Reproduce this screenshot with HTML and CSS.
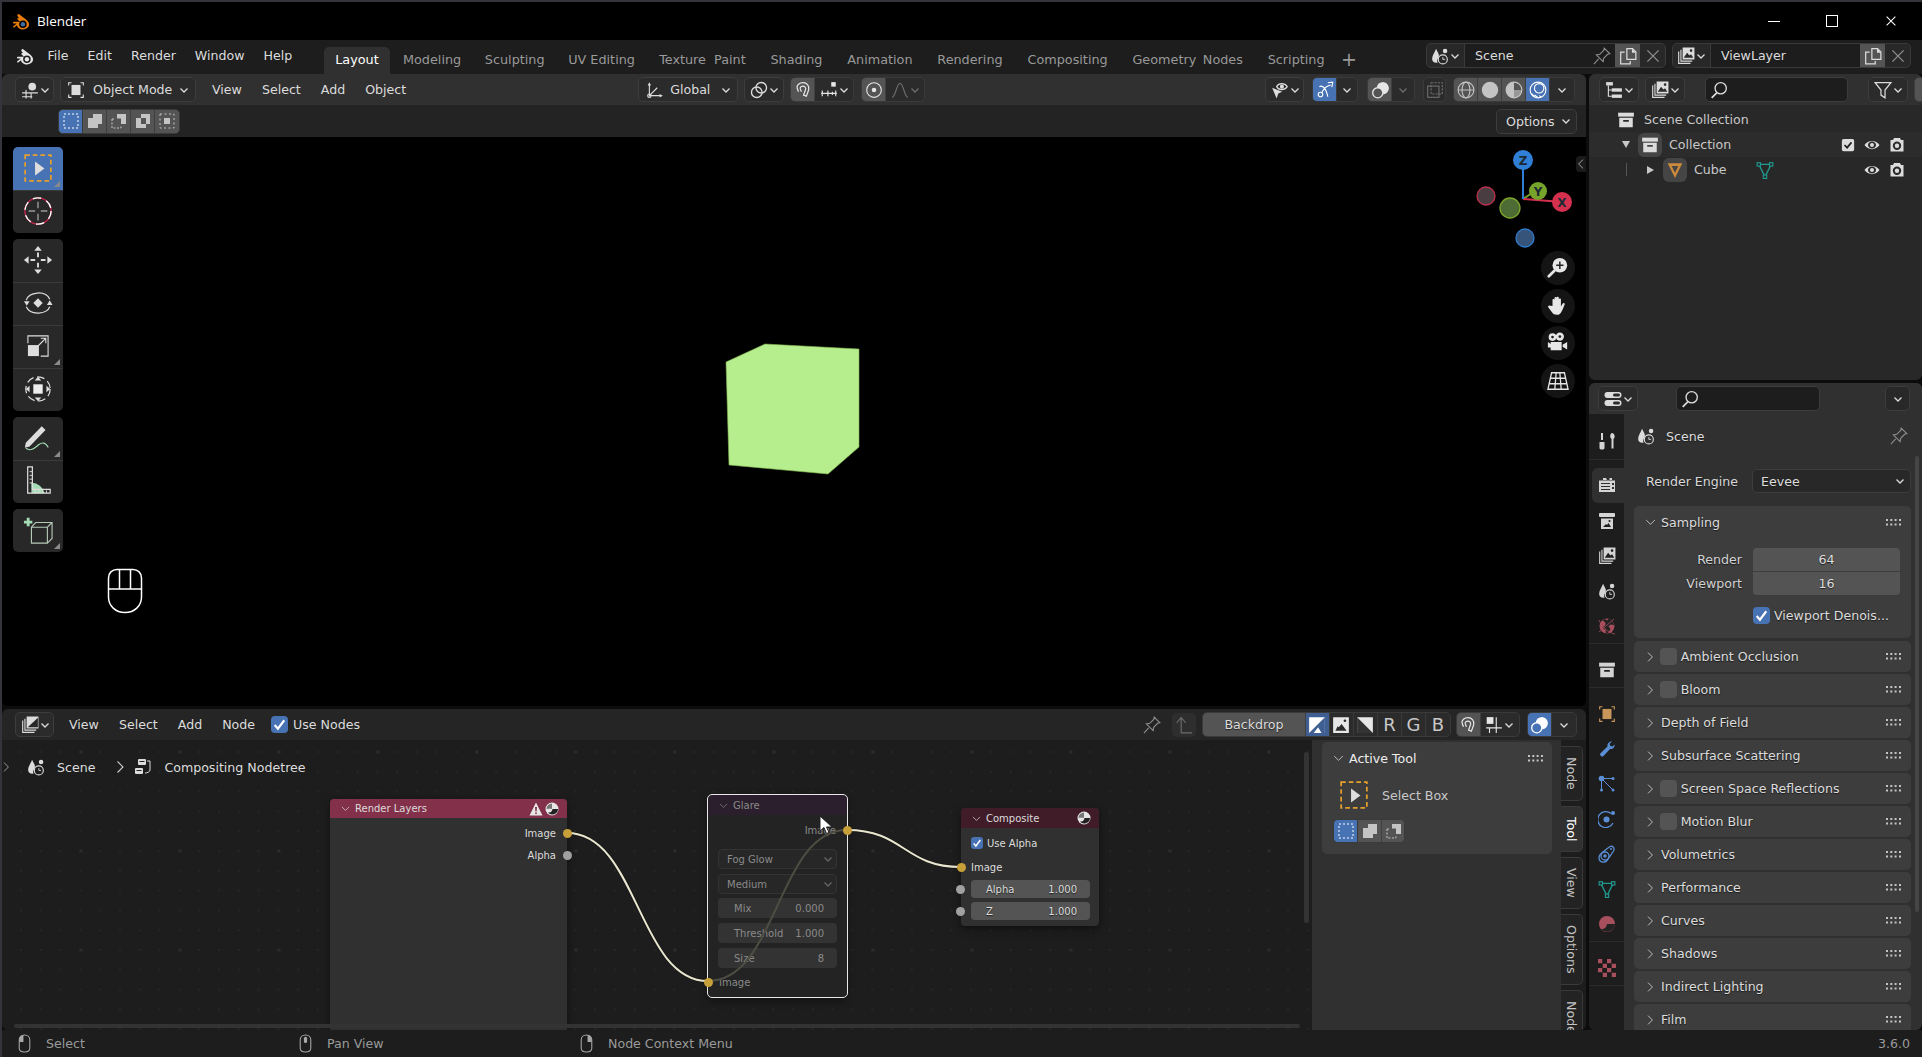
FILE: index.html
```html
<!DOCTYPE html>
<html lang="en">
<head>
    <meta charset="UTF-8">
    <title>Blender</title>
    <link rel="stylesheet" href="styles.css">
</head>
<body>
<svg class="sprite" xmlns="http://www.w3.org/2000/svg">
    <symbol id="i-blender" viewBox="0 0 20 18"><path fill-rule="evenodd" d="M7.500 1.300l7 5.200c2.100 1.600 3.500 3.400 3.500 5.500 0 3.300-3.100 5.500-6.500 5.500-3.100 0-5.900-1.900-6.200-4.500l-2.700 2.100c-.9.600-2-.3-1.300-1.200l3.700-2.800H1.800c-1.100 0-1.100-1.800 0-1.800l6.700-.1L5.900 6.800c-.9-.9.100-2 1.100-1.500l.7.500L5.800 3.400c-.7-1 .7-2.800 1.700-2.100zM11.500 7.900a4 4 0 1 0 0 8 4 4 0 0 0 0-8z"/><circle cx="11.500" cy="11.900" r="2.300" fill="var(--eye, currentColor)"/></symbol>
    <symbol id="i-view3d" viewBox="0 0 16 16"><circle cx="10" cy="5" r="3.400"/><path d="M1 10.500h14M1 14h9M4.500 8v7.500M9 10v5.500" fill="none" stroke="currentColor"/></symbol>
    <symbol id="i-objmode" viewBox="0 0 16 16"><rect x="4" y="3.500" width="8" height="9"/><path d="M1.500 4V1.500H4M12 1.500h2.500V4M14.500 12v2.500H12M4 14.500H1.500V12" fill="none" stroke="currentColor"/></symbol>
    <symbol id="i-orient" viewBox="0 0 16 16"><path d="M3 2.500V13h11M3 13l7-7" fill="none" stroke="currentColor"/><circle cx="3" cy="13" r="1.500" fill="none" stroke="currentColor"/><path d="M1.500 4L3 1l1.500 3zM12 11.500l3 1.500-3 1.500z"/></symbol>
    <symbol id="i-pivot" viewBox="0 0 16 16"><circle cx="6" cy="10" r="4.700" fill="none" stroke="currentColor" stroke-width="1.200"/><circle cx="10" cy="6" r="4.700" fill="none" stroke="currentColor" stroke-width="1.200"/></symbol>
    <symbol id="i-magnet" viewBox="0 0 16 16"><path d="M4 9.500L2.800 6.500C2 3.700 5 1.500 8 1.500c3.500 0 6 3 5 6.500l-2 5.500-2.500-1 1.800-5c.5-1.500-.8-3-2.400-3-1.400 0-2.800 1-2.300 2.500l1 2.500" fill="none" stroke="currentColor" stroke-width="1.100"/></symbol>
    <symbol id="i-increment" viewBox="0 0 16 16"><rect x="10" y="1" width="4" height="4"/><path d="M1 11h14M2 8.500v5M7 8.500v5M14 8.500v5M11 9.500v3" fill="none" stroke="currentColor"/></symbol>
    <symbol id="i-propdot" viewBox="0 0 16 16"><circle cx="8" cy="8" r="6.500" fill="none" stroke="currentColor"/><circle cx="8" cy="8" r="2"/></symbol>
    <symbol id="i-falloff" viewBox="0 0 16 16"><path d="M1 14.500c3 0 4-12.500 7-12.500s4 12.500 7 12.500" fill="none" stroke="currentColor"/></symbol>
    <symbol id="i-visibility" viewBox="0 0 16 16"><path d="M5 5c2-3.500 7-3.500 9.500 0-2.500 3.500-7.500 3.500-9.500 0z" fill="none" stroke="currentColor"/><circle cx="9.700" cy="5" r="1.800"/><path d="M1 6l9 3.500-3.500 1.500-1.500 4.500z"/></symbol>
    <symbol id="i-gizmo" viewBox="0 0 16 16"><circle cx="4" cy="12" r="2" fill="none" stroke="currentColor"/><path d="M5 10.500C7 7 8 5 13 3.500M15 1l-4.500.5M15 1l-1 4.500M3 5c3-1.500 6 1.500 7.500 9" fill="none" stroke="currentColor"/></symbol>
    <symbol id="i-overlay" viewBox="0 0 16 16"><circle cx="6" cy="10.500" r="4.500" fill="none" stroke="currentColor" stroke-width="1.200"/><path fill-rule="evenodd" d="M10 1a5.500 5.500 0 0 1 .8 11 5.500 5.500 0 0 0-5.700-6.300A5.500 5.500 0 0 1 10 1z"/></symbol>
    <symbol id="i-xray" viewBox="0 0 16 16"><rect x="4.500" y="1.500" width="10" height="10" fill="none" stroke="currentColor" stroke-dasharray="2 1"/><rect x="1.500" y="4.500" width="10" height="10" fill="none" stroke="currentColor"/></symbol>
    <symbol id="i-wire" viewBox="0 0 16 16"><g fill="none" stroke="currentColor"><circle cx="8" cy="8" r="7"/><ellipse cx="8" cy="8" rx="3.500" ry="7"/><path d="M1 8h14"/></g></symbol>
    <symbol id="i-solid" viewBox="0 0 16 16"><circle cx="8" cy="8" r="7.300"/></symbol>
    <symbol id="i-matball" viewBox="0 0 16 16"><circle cx="8" cy="8" r="7" fill="none" stroke="currentColor"/><path d="M8 1a7 7 0 0 0-7 7 7 7 0 0 0 7 7z"/><path d="M8 8h7a7 7 0 0 1-7 7z" opacity=".6"/></symbol>
    <symbol id="i-rendered" viewBox="0 0 16 16"><circle cx="8" cy="8" r="7" fill="none" stroke="currentColor"/><circle cx="9" cy="6.500" r="4.200" fill="none" stroke="currentColor"/><path d="M2 11l3 3M5 12.500l2.500 2M9 13l2 1.500" stroke="currentColor" fill="none"/></symbol>
    <symbol id="i-scene" viewBox="0 0 16 16"><path d="M4.500 1.500C5.500 4 7.500 6 7 8.500 6.500 10 5.500 11 5.500 12.500c0 .5 0 1 .3 1.500C3 14.500 1 13 1 10.500 1 7.500 3.500 4.500 4.500 1.500z"/><circle cx="12.500" cy="3.500" r="2"/><circle cx="10.500" cy="11" r="4" fill="none" stroke="currentColor"/><path d="M10.500 9v2h2" fill="none" stroke="currentColor" stroke-width=".8"/></symbol>
    <symbol id="i-layer" viewBox="0 0 16 16"><path d="M1.500 4v10.500H12M3.500 2.500v10h10" fill="none" stroke="currentColor"/><path fill-rule="evenodd" d="M5 .5h10.500v10.500H5zM6 9.500l3-4.500 2 2.500 1.500-1L14.500 9.500zM12.500 2a1.200 1.200 0 1 0 0 2.400 1.200 1.200 0 0 0 0-2.400z"/></symbol>
    <symbol id="i-copy" viewBox="0 0 16 16"><path d="M7 1.500h5l3 3V11H7zM5 4.500H1.500V15H10v-2.500" fill="none" stroke="currentColor" stroke-width="1.100"/><path d="M11.500 1.500v3.500H15z"/></symbol>
    <symbol id="i-x" viewBox="0 0 16 16"><path d="M3 3l10 10M13 3L3 13" fill="none" stroke="currentColor" stroke-width="1.200"/></symbol>
    <symbol id="i-pin" viewBox="0 0 16 16"><path d="M10 1l5 5-2 .5-3.500 3.500-.5 3-6-6 3-.5L9.500 3zM5 10.500L.8 15.200" fill="none" stroke="currentColor"/></symbol>
    <symbol id="i-search" viewBox="0 0 16 16"><circle cx="9.500" cy="6.500" r="5" fill="none" stroke="currentColor" stroke-width="1.200"/><path d="M6 10.500L1.500 15" stroke="currentColor" stroke-width="1.500"/></symbol>
    <symbol id="i-filter" viewBox="0 0 16 16"><path d="M1 1.500h14L9.800 8v7l-3.600-2.500V8z" fill="none" stroke="currentColor" stroke-width="1.100"/></symbol>
    <symbol id="i-tree" viewBox="0 0 16 16"><rect x="1" y="1" width="6" height="3"/><rect x="6" y="6.500" width="9" height="3"/><rect x="6" y="12" width="9" height="3"/><path d="M3 4v9.500h3M3 8h3" fill="none" stroke="currentColor"/></symbol>
    <symbol id="i-box" viewBox="0 0 16 16"><rect x="1" y="1.500" width="14" height="3.500"/><path fill-rule="evenodd" d="M2 6h12v8.500H2zM5.500 8v1.500h5V8z"/></symbol>
    <symbol id="i-meshobj" viewBox="0 0 16 16"><path d="M1.500 2h13L8 15zM5 4.500L8 10.500l3-6z" fill-rule="evenodd"/></symbol>
    <symbol id="i-mesh" viewBox="0 0 16 16"><path d="M2.500 3h11L8 14z" fill="none" stroke="currentColor" stroke-width="1.200"/><rect x="1" y="1.500" width="3" height="3" fill="#282828" stroke="currentColor"/><rect x="12" y="1.500" width="3" height="3" fill="#282828" stroke="currentColor"/><rect x="6.500" y="12.500" width="3" height="3" fill="#282828" stroke="currentColor"/></symbol>
    <symbol id="i-check" viewBox="0 0 16 16"><rect x="1" y="1" width="14" height="14" rx="2"/><path d="M4 8l3 3 5-6" fill="none" stroke="#222" stroke-width="2"/></symbol>
    <symbol id="i-eye" viewBox="0 0 16 16"><path fill-rule="evenodd" d="M.5 8C4 2.500 12 2.500 15.500 8 12 13.500 4 13.500.5 8zM8 4.500C6 4.500 4 6 4 8s2 3.500 4 3.500S12 10 12 8 10 4.500 8 4.500z"/><circle cx="8" cy="8" r="2"/></symbol>
    <symbol id="i-cam" viewBox="0 0 16 16"><path fill-rule="evenodd" d="M5 1h6l1 2h2.500v11.500H1.500V3H4zM8 4.500a4.200 4.200 0 1 0 0 8.400 4.200 4.200 0 0 0 0-8.400z"/><circle cx="8" cy="8.700" r="2.200"/></symbol>
    <symbol id="i-selbox" viewBox="0 0 24 24"><rect x="1" y="1" width="22" height="22" fill="none" stroke="#e59f2d" stroke-width="1.500" stroke-dasharray="4 2.500"/><path d="M9.500 6.500l8 6-8 6z" fill="#ddd"/></symbol>
    <symbol id="i-cursor3d" viewBox="0 0 32 32"><circle cx="16" cy="16" r="14" fill="none" stroke="#c0264c" stroke-width="1.500"/><circle cx="16" cy="16" r="14" fill="none" stroke="#fff" stroke-width="1.500" stroke-dasharray="9 6"/><path d="M16 6v7M16 19v7M6 16h7M19 16h7" stroke="#999" stroke-width="1.500"/></symbol>
    <symbol id="i-move" viewBox="0 0 32 32"><g fill="#ddd"><path d="M16 1l4 5h-8zM16 31l4-5h-8zM1 16l5-4v8zM31 16l-5-4v8z"/></g><path d="M16 8v5M16 19v5M8 16h5M19 16h5" stroke="#ddd" stroke-width="2"/></symbol>
    <symbol id="i-rotate" viewBox="0 0 32 32"><path d="M3.500 13C6 4 24 2 28.500 12M28.500 20C26 28 8 30 3.500 20" fill="none" stroke="#ddd" stroke-width="1.300"/><path d="M16 11l5 5-5 5-5-5zM1 14h6l-3 5zM25.500 18h6l-3-5z" fill="#ddd"/></symbol>
    <symbol id="i-scale" viewBox="0 0 24 24"><rect x="1" y="11" width="12" height="12" fill="#ddd"/><path d="M1 9V1h22v22h-8M12 12l8-8M15 3.500h5.500V9" fill="none" stroke="#ddd" stroke-width="1.200"/></symbol>
    <symbol id="i-transform" viewBox="0 0 32 32"><circle cx="16" cy="16" r="13" fill="none" stroke="#ddd" stroke-width="1.300" stroke-dasharray="8 4"/><rect x="11" y="11" width="10" height="10" fill="#eee"/><path d="M16 3l3.500 4h-7zM16 29l3.500-4h-7zM3 16l4-3.500v7zM29 16l-4-3.500v7z" fill="#ddd"/></symbol>
    <symbol id="i-annotate" viewBox="0 0 32 32"><path d="M3 21L20 3.500l4 4L7 25l-5 1.500z" fill="#ddd"/><path d="M3 27c6 4 10-1 14-4s7-2 10 3" fill="none" stroke="#a6dcb5" stroke-width="1.200"/></symbol>
    <symbol id="i-measure" viewBox="0 0 32 32"><path d="M9 18a14 14 0 0 1 14 11H9z" fill="#a6dcb5"/><path d="M5 1h5v24h19v4H5z" fill="none" stroke="#ddd" stroke-width="1.300"/><path d="M7 6h3M7 10h3M7 14h3M7 18h3M13 26v3M17 26v3M21 26v3M25 26v3" stroke="#ddd"/></symbol>
    <symbol id="i-addcube" viewBox="0 0 32 32"><path d="M4 3h3v3h3v3H7v3H4V9H1V6h3z" fill="#a6dcb5"/><path d="M9 13h17v17H9zM9 13l4.500-5H31v17l-5 5M26 13l5-5" fill="none" stroke="#b5c9b8" stroke-width="1.200"/></symbol>
    <symbol id="i-zoomin" viewBox="0 0 24 24"><circle cx="14" cy="9" r="8"/><path d="M14 5v8M10 9h8" stroke="#222" stroke-width="1.600"/><path d="M8 15L2 21" stroke="currentColor" stroke-width="3" stroke-linecap="round"/></symbol>
    <symbol id="i-hand" viewBox="0 0 24 24"><path d="M6 12V5.500c0-1.500 2.200-1.500 2.200 0V10V3.500c0-1.600 2.300-1.600 2.300 0V10V3c0-1.600 2.400-1.600 2.400 0v7.500V5c0-1.500 2.300-1.500 2.300 0v7.500l1.800-3c.9-1.400 2.900-.5 2.200 1-1.300 3-2.400 6.300-4.200 9-1 1.500-2.500 2-4.300 2-2.500 0-4-.8-5.500-3l-3.700-5c-1-1.400.9-2.800 2-1.700z"/></symbol>
    <symbol id="i-camera" viewBox="0 0 24 24"><circle cx="6" cy="5.500" r="4.200"/><circle cx="14" cy="5" r="4.500"/><path d="M4 11h12v9H4zM17 14l5-3v8l-5-3zM1 11l3 2v4l-3 0z"/><circle cx="6" cy="5.500" r="1.500" fill="#222"/><circle cx="14" cy="5" r="1.500" fill="#222"/></symbol>
    <symbol id="i-ortho" viewBox="0 0 24 24"><path d="M5 3h14l4 18H1zM10 3L8.500 21M14 3l1.500 18M3.700 9h16.600M2.500 15h19" fill="none" stroke="currentColor" stroke-width="1.400"/></symbol>
    <symbol id="i-mouse" viewBox="0 0 36 46"><path d="M1.500 20V10C1.500 5 5 1.500 10 1.500h16c5 0 8.500 3.500 8.500 8.500v19c0 9-7 15.500-16.500 15.500S1.500 38 1.500 29zM1.500 21h33M12.500 1.500V21M23.500 1.500V21" fill="none" stroke="#fff" stroke-width="1.500"/></symbol>
    <symbol id="i-props" viewBox="0 0 18 16"><rect x=".5" y="1" width="17" height="6" rx="3"/><rect x=".5" y="9" width="17" height="6" rx="3"/><rect x="9" y="2.500" width="7" height="3" rx="1.500" fill="#2b2b2b"/><rect x="9" y="10.500" width="7" height="3" rx="1.500" fill="#2b2b2b"/></symbol>
    <symbol id="i-tool" viewBox="0 0 18 18"><path d="M3 1h2v7H3zM1.500 10h5v6c0 2-5 2-5 0zM14 1c3 .5 3.500 4.500 1.500 6v9.500h-2V7c-2-1.500-1.500-5.500.5-6v3.500h0z"/></symbol>
    <symbol id="i-render" viewBox="0 0 18 18"><path d="M5 1h3l1 2H5zM11.500 1H14v2h-2.500z"/><path fill-rule="evenodd" d="M1 3.500h16V15H1zM3 6v1h9V6zM3 9v1h9V9zM3 12v1h9v-1zM14 6v2h2V6zM14 10v2h2v-2z"/></symbol>
    <symbol id="i-output" viewBox="0 0 18 18"><rect x="1" y="1" width="16" height="4" rx="1"/><path fill-rule="evenodd" d="M3 6.500h12V17H3zM5 15h8l-2.500-4-1.500 2-1-1zM11.500 8a1 1 0 1 0 0 2 1 1 0 0 0 0-2z"/></symbol>
    <symbol id="i-world" viewBox="0 0 18 18"><circle cx="9" cy="9" r="7.500" fill="#a84f5e"/><path d="M4.500 3.500c2 1 3.500 2 3 4S4 9.500 5 12l2.500.5.5 4 2.500-1 2-3.500-2-2.500 2-2 3.500.5C16 6 14 2.500 11 1.500L9 3.500 7 2z" fill="#222"/><path d="M1 15L16 2M1 3c2 6 9 13 16 14" fill="none" stroke="#a84f5e" stroke-width=".8"/></symbol>
    <symbol id="i-wrench" viewBox="0 0 18 18"><path d="M16.500 4.500c.5 2.500-1.500 5-4.500 4.500l-6.500 7c-1.500 1.600-4.500-1-3-2.800L9.500 6.500C9 3.500 11.500 1 14 1.500L11.500 4 12.500 6 14.500 6.500z"/></symbol>
    <symbol id="i-particles" viewBox="0 0 18 18"><circle cx="3.500" cy="3.500" r="2.800"/><circle cx="15" cy="3.500" r="1.500"/><circle cx="3.500" cy="15" r="1.500"/><circle cx="15" cy="15" r="1.500"/><path d="M3.500 3.500H14M3.500 3.500V14M3.500 3.500L14 14" stroke="currentColor" fill="none"/></symbol>
    <symbol id="i-physics" viewBox="0 0 18 18"><circle cx="8.500" cy="9.500" r="3"/><circle cx="15" cy="3" r="2"/><path d="M13 3.500A8 8 0 1 0 15 13" fill="none" stroke="currentColor" stroke-width="1.300"/></symbol>
    <symbol id="i-constraint" viewBox="0 0 18 18"><path d="M12 1.500c3-1 5 2 3.500 4.500L9 15.500c-2 2.500-8 2.500-8-3 0-4 5-6 7-8z" fill="none" stroke="currentColor" stroke-width="1.300"/><circle cx="7" cy="11" r="4" fill="none" stroke="currentColor" stroke-width="1.300"/><circle cx="7" cy="11" r="1.700"/><circle cx="13" cy="4" r="1"/></symbol>
    <symbol id="i-material" viewBox="0 0 18 18"><circle cx="9" cy="9" r="8"/><path d="M9 9h8a8 8 0 0 1-14 5c3 .5 5.500-1 6-5z" fill="#222"/></symbol>
    <symbol id="i-texture" viewBox="0 0 16 16"><path d="M0 0h4v4H0zM8 0h4v4H8zM4 4h4v4H4zM12 4h4v4h-4zM0 8h4v4H0zM8 8h4v4H8zM4 12h4v4H4zM12 12h4v4h-4z"/><path d="M4 0h4v4H4zM12 0h4v4h-4zM0 4h4v4H0zM8 4h4v4H8zM4 8h4v4H4zM12 8h4v4h-4zM0 12h4v4H0zM8 12h4v4H8z" fill="#1a1a1a"/></symbol>
    <symbol id="i-compositor" viewBox="0 0 16 16"><path d="M1.500 4v10.500H12M3.500 2.500v10h10" fill="none" stroke="currentColor"/><path d="M5 .5h10.500v10.500H5z" fill="currentColor"/><path d="M6 10L15 1.500V10z" fill="#282828"/></symbol>
    <symbol id="i-nodetree" viewBox="0 0 18 18"><rect x="4" y="1" width="8" height="6" rx="1"/><rect x="1" y="10" width="8" height="6" rx="1"/><path d="M13 3h3v9c0 2-3 3-5 3" fill="none" stroke="currentColor"/><rect x="5.500" y="3" width="5" height="1" fill="#222"/><rect x="2.500" y="12" width="5" height="1" fill="#222"/></symbol>
    <symbol id="i-up" viewBox="0 0 16 16"><path d="M5.500 15V1.500M1.500 6l4-4.500 4 4.500M5.500 15H15" fill="none" stroke="currentColor"/></symbol>
    <symbol id="i-warn" viewBox="0 0 14 14"><path fill-rule="evenodd" d="M7 .5l6.500 13H.5zM6 5l.4 4.500h1.200L8 5zM6.200 10.500v1.500h1.600v-1.500z"/></symbol>
    <symbol id="i-matnode" viewBox="0 0 14 14"><circle cx="7" cy="7" r="6.500"/><path d="M7 1.500a5.500 5.500 0 0 0-5.500 5.500c1.500 0 4-.3 5.500 0z" fill="#777"/><path d="M7.500 7h5.500c0 3-2.500 5.500-6 5.500-1.500 0-3-.7-4-2 3 .5 4-1 4.500-3.500z" fill="#222"/></symbol>
    <symbol id="i-bdchan" viewBox="0 0 16 16"><path d="M1 1h14v14H1z"/><path d="M1 15L15 1v14z" fill="#3f5f92"/><path d="M5 15l4-5 3 5z"/></symbol>
    <symbol id="i-bdimg" viewBox="0 0 16 16"><path fill-rule="evenodd" d="M1 1h14v14H1zM3 13h10l-4.500-6L6 10 5 9zM11.500 3a1.200 1.200 0 1 0 0 2.400 1.200 1.200 0 0 0 0-2.400z"/></symbol>
    <symbol id="i-bdalpha" viewBox="0 0 16 16"><path d="M1 1h14v14H1z" fill="#e6e6e6"/><path d="M1 1l14 14H1z" fill="#333"/></symbol>
    <symbol id="i-nodesnap" viewBox="0 0 16 16"><rect x="1.500" y="1" width="6" height="6"/><path d="M10 1v14M4 10v5M1 10.500h14" fill="none" stroke="currentColor"/></symbol>
    <symbol id="i-m1" viewBox="0 0 12 18"><path d="M1 5.500C1 3 2.500 1 5 1v6.500H1z" fill="currentColor"/><path d="M1 5.500C1 3 3 1 6 1s5 2 5 4.500v8C11 16 9 17 6 17s-5-1-5-3.500z" fill="none" stroke="currentColor"/></symbol>
    <symbol id="i-m2" viewBox="0 0 12 18"><rect x="4.500" y="2.500" width="3" height="6" rx="1.500" fill="currentColor"/><path d="M1 5.500C1 3 3 1 6 1s5 2 5 4.500v8C11 16 9 17 6 17s-5-1-5-3.500z" fill="none" stroke="currentColor"/></symbol>
    <symbol id="i-m3" viewBox="0 0 12 18"><path d="M7 1c2.500 0 4 2 4 4.500v2H7z" fill="currentColor"/><path d="M1 5.500C1 3 3 1 6 1s5 2 5 4.500v8C11 16 9 17 6 17s-5-1-5-3.500z" fill="none" stroke="currentColor"/></symbol>
    <symbol id="i-grip" viewBox="0 0 15 7"><path d="M0 0h2v2H0zM4.300 0h2v2h-2zM8.600 0h2v2h-2zM13 0h2v2h-2zM0 4.500h2v2H0zM4.300 4.500h2v2h-2zM8.600 4.500h2v2h-2zM13 4.500h2v2h-2z"/></symbol>
    <symbol id="i-chev" viewBox="0 0 10 10"><path d="M1.500 3.500L5 7l3.500-3.500" fill="none" stroke="currentColor" stroke-width="1.300"/></symbol>
    <symbol id="i-chevr" viewBox="0 0 10 14"><path d="M2.500 1.500L8 7l-5.500 5.500" fill="none" stroke="currentColor" stroke-width="1.100"/></symbol>
    <symbol id="i-chevd" viewBox="0 0 14 10"><path d="M1.500 2.500L7 8l5.500-5.500" fill="none" stroke="currentColor" stroke-width="1.100"/></symbol>
    <symbol id="i-modes1" viewBox="0 0 16 16"><rect x="1" y="1" width="14" height="14" fill="none" stroke="#fff" stroke-dasharray="2 2"/></symbol>
    <symbol id="i-modes2" viewBox="0 0 16 16"><path d="M6 1h9v10h-4v4H1V5h5z"/></symbol>
    <symbol id="i-modes3" viewBox="0 0 16 16"><path d="M6 1h9v10H10V5.500H6z"/><path d="M1 6h3M1 6v9h9v-2" fill="none" stroke="currentColor" stroke-dasharray="2 1.500"/></symbol>
    <symbol id="i-modes4" viewBox="0 0 16 16"><path fill-rule="evenodd" d="M6 1h9v10h-4v4H1V5h5zM6 5v6h5V5z"/></symbol>
    <symbol id="i-modes5" viewBox="0 0 16 16"><rect x="1" y="1" width="14" height="14" fill="none" stroke="currentColor" stroke-dasharray="2 2.500"/><rect x="5" y="5" width="6" height="6"/></symbol>
</svg>

<div class="window">
    <div class="titlebar">
        <svg class="title-logo"><use href="#i-blender"/></svg>
        <span class="title-text">Blender</span>
        <div class="win-btns">
            <span class="win-min"></span>
            <span class="win-max"></span>
            <svg class="win-close"><use href="#i-x"/></svg>
        </div>
    </div>

    <div class="topbar">
        <svg class="top-logo"><use href="#i-blender"/></svg>
        <nav class="top-menu">
            <span>File</span><span>Edit</span><span>Render</span><span>Window</span><span>Help</span>
        </nav>
        <div class="tabs">
            <span class="tab active">Layout</span>
            <span class="tab">Modeling</span>
            <span class="tab">Sculpting</span>
            <span class="tab">UV Editing</span>
            <span class="tab">Texture Paint</span>
            <span class="tab">Shading</span>
            <span class="tab">Animation</span>
            <span class="tab">Rendering</span>
            <span class="tab">Compositing</span>
            <span class="tab">Geometry Nodes</span>
            <span class="tab">Scripting</span>
            <span class="tab-add">+</span>
        </div>
        <div class="id-group scene-id">
            <span class="id-ic"><svg class="ic"><use href="#i-scene"/></svg><svg class="chev"><use href="#i-chev"/></svg></span>
            <span class="id-name">Scene<svg class="ic dim id-pin"><use href="#i-pin"/></svg></span>
            <span class="id-copy"><svg class="ic"><use href="#i-copy"/></svg></span>
            <span class="id-x"><svg class="ic dim"><use href="#i-x"/></svg></span>
        </div>
        <div class="id-group layer-id">
            <span class="id-ic"><svg class="ic"><use href="#i-layer"/></svg><svg class="chev"><use href="#i-chev"/></svg></span>
            <span class="id-name">ViewLayer</span>
            <span class="id-copy"><svg class="ic"><use href="#i-copy"/></svg></span>
            <span class="id-x"><svg class="ic dim"><use href="#i-x"/></svg></span>
        </div>
    </div>

    <div class="main">
        <div class="col-left">
            <section class="area viewport">
                <div class="header">
                    <span class="btn drop ed-drop"><svg class="ic"><use href="#i-view3d"/></svg><svg class="chev"><use href="#i-chev"/></svg></span>
                    <span class="btn drop mode-drop"><svg class="ic"><use href="#i-objmode"/></svg><span class="grow">Object Mode</span><svg class="chev"><use href="#i-chev"/></svg></span>
                    <nav class="menu"><span>View</span><span>Select</span><span>Add</span><span>Object</span></nav>
                    <span class="btn drop orient-drop"><svg class="ic"><use href="#i-orient"/></svg><span class="grow">Global</span><svg class="chev"><use href="#i-chev"/></svg></span>
                    <span class="btn drop pivot-drop"><svg class="ic"><use href="#i-pivot"/></svg><svg class="chev"><use href="#i-chev"/></svg></span>
                    <div class="btn-row snap-row">
                        <span class="seg on"><svg class="ic"><use href="#i-magnet"/></svg></span>
                        <span class="seg seg-wide"><svg class="ic"><use href="#i-increment"/></svg><svg class="chev"><use href="#i-chev"/></svg></span>
                    </div>
                    <div class="btn-row prop-row">
                        <span class="seg on"><svg class="ic"><use href="#i-propdot"/></svg></span>
                        <span class="seg seg-wide faded"><svg class="ic"><use href="#i-falloff"/></svg><svg class="chev"><use href="#i-chev"/></svg></span>
                    </div>
                    <span class="btn drop vis-drop"><svg class="ic"><use href="#i-visibility"/></svg><svg class="chev"><use href="#i-chev"/></svg></span>
                    <div class="btn-row gizmo-row">
                        <span class="seg blue"><svg class="ic"><use href="#i-gizmo"/></svg></span>
                        <span class="seg seg-chev"><svg class="chev"><use href="#i-chev"/></svg></span>
                    </div>
                    <div class="btn-row overlay-row">
                        <span class="seg on"><svg class="ic"><use href="#i-overlay"/></svg></span>
                        <span class="seg seg-chev faded"><svg class="chev"><use href="#i-chev"/></svg></span>
                    </div>
                    <div class="btn-row xray-row">
                        <span class="seg faded"><svg class="ic"><use href="#i-xray"/></svg></span>
                    </div>
                    <div class="btn-row shade-row">
                        <span class="seg on"><svg class="ic"><use href="#i-wire"/></svg></span>
                        <span class="seg on"><svg class="ic"><use href="#i-solid"/></svg></span>
                        <span class="seg on"><svg class="ic"><use href="#i-matball"/></svg></span>
                        <span class="seg blue"><svg class="ic"><use href="#i-rendered"/></svg></span>
                        <span class="seg seg-chev"><svg class="chev"><use href="#i-chev"/></svg></span>
                    </div>
                </div>
                <div class="toolset">
                    <div class="btn-row modes">
                        <span class="seg blue"><svg class="ic"><use href="#i-modes1"/></svg></span>
                        <span class="seg on"><svg class="ic"><use href="#i-modes2"/></svg></span>
                        <span class="seg on"><svg class="ic"><use href="#i-modes3"/></svg></span>
                        <span class="seg on"><svg class="ic"><use href="#i-modes4"/></svg></span>
                        <span class="seg on"><svg class="ic"><use href="#i-modes5"/></svg></span>
                    </div>
                    <span class="btn options">Options<svg class="chev"><use href="#i-chev"/></svg></span>
                </div>
                <div class="scene-view">
                    <svg class="cube" viewBox="0 0 140 135"><polygon points="2,19 41,1 135,6 135,104 104,131 5,122" fill="#b6ee8e" stroke="#7fb04e" stroke-width=".6"/></svg>
                    <div class="toolbar">
                        <div class="tool-group">
                            <span class="tool active corner"><svg class="tool-ic selbox-ic"><use href="#i-selbox"/></svg></span>
                            <span class="tool"><svg class="tool-ic"><use href="#i-cursor3d"/></svg></span>
                        </div>
                        <div class="tool-group">
                            <span class="tool"><svg class="tool-ic"><use href="#i-move"/></svg></span>
                            <span class="tool"><svg class="tool-ic"><use href="#i-rotate"/></svg></span>
                            <span class="tool corner"><svg class="tool-ic scale-ic"><use href="#i-scale"/></svg></span>
                            <span class="tool"><svg class="tool-ic"><use href="#i-transform"/></svg></span>
                        </div>
                        <div class="tool-group">
                            <span class="tool corner"><svg class="tool-ic"><use href="#i-annotate"/></svg></span>
                            <span class="tool"><svg class="tool-ic"><use href="#i-measure"/></svg></span>
                        </div>
                        <div class="tool-group">
                            <span class="tool corner"><svg class="tool-ic"><use href="#i-addcube"/></svg></span>
                        </div>
                    </div>
                    <svg class="mouse-hint"><use href="#i-mouse"/></svg>
                    <svg class="gizmo" viewBox="0 0 100 100">
                        <circle cx="11" cy="48" r="9" fill="#4a3d42" stroke="#c0304f" stroke-width="1.300"/>
                        <circle cx="35" cy="60" r="10" fill="#4d6b34" stroke="#7da52a" stroke-width="1.300"/>
                        <circle cx="50" cy="90" r="9" fill="#36537a" stroke="#2f7ccc" stroke-width="1.300"/>
                        <path d="M48 51L60 43" stroke="#76a32a" stroke-width="2"/>
                        <path d="M48 51L87 54" stroke="#d6304f" stroke-width="2"/>
                        <path d="M48 51V12" stroke="#2f7fd6" stroke-width="2"/>
                        <circle cx="63" cy="43" r="9" fill="#76a32a"/>
                        <circle cx="48" cy="12" r="10" fill="#2f7fd6"/>
                        <circle cx="87" cy="54" r="10" fill="#d6304f"/>
                        <text x="48" y="16.500" class="gz-label">Z</text>
                        <text x="63" y="47.500" class="gz-label">Y</text>
                        <text x="87" y="58.500" class="gz-label">X</text>
                    </svg>
                    <div class="nav-btns">
                        <span class="nav-btn"><svg class="nav-ic"><use href="#i-zoomin"/></svg></span>
                        <span class="nav-btn"><svg class="nav-ic"><use href="#i-hand"/></svg></span>
                        <span class="nav-btn"><svg class="nav-ic"><use href="#i-camera"/></svg></span>
                        <span class="nav-btn"><svg class="nav-ic"><use href="#i-ortho"/></svg></span>
                    </div>
                    <span class="side-toggle"><svg class="tog-ic"><use href="#i-chevr"/></svg></span>
                </div>
            </section>

            <section class="area nodes">
                <div class="header node-header">
                    <span class="btn drop ed-drop"><svg class="ic"><use href="#i-compositor"/></svg><svg class="chev"><use href="#i-chev"/></svg></span>
                    <nav class="menu node-menu"><span>View</span><span>Select</span><span>Add</span><span>Node</span></nav>
                    <label class="use-nodes"><span class="check"><svg viewBox="0 0 16 16"><path d="M3.500 8.500l3 3.500 6-8" fill="none" stroke="#fff" stroke-width="2"/></svg></span>Use Nodes</label>
                    <svg class="ic dim node-pin"><use href="#i-pin"/></svg>
                    <span class="seg faded up-btn"><svg class="ic"><use href="#i-up"/></svg></span>
                    <div class="btn-row backdrop-row">
                        <span class="seg on backdrop-btn">Backdrop</span>
                        <span class="seg blue navy"><svg class="ic"><use href="#i-bdchan"/></svg></span>
                        <span class="seg"><svg class="ic"><use href="#i-bdimg"/></svg></span>
                        <span class="seg"><svg class="ic"><use href="#i-bdalpha"/></svg></span>
                        <span class="seg letter">R</span>
                        <span class="seg letter">G</span>
                        <span class="seg letter">B</span>
                    </div>
                    <div class="btn-row node-snap">
                        <span class="seg on"><svg class="ic"><use href="#i-magnet"/></svg></span>
                        <span class="seg seg-chevw"><svg class="ic"><use href="#i-nodesnap"/></svg><svg class="chev"><use href="#i-chev"/></svg></span>
                    </div>
                    <div class="btn-row node-overlay">
                        <span class="seg blue"><svg class="ic"><use href="#i-overlay"/></svg></span>
                        <span class="seg seg-chev"><svg class="chev"><use href="#i-chev"/></svg></span>
                    </div>
                </div>
                <div class="node-body">
                    <div class="canvas">
                        <div class="crumbs">
                            <svg class="crumb-toggle"><use href="#i-chevr"/></svg>
                            <svg class="ic crumb-ic"><use href="#i-scene"/></svg><span>Scene</span>
                            <svg class="crumb-sep"><use href="#i-chevr"/></svg>
                            <svg class="ic crumb-ic"><use href="#i-nodetree"/></svg><span>Compositing Nodetree</span>
                        </div>

                        <div class="node render-layers">
                            <div class="node-head"><svg class="node-chev"><use href="#i-chevd"/></svg><span class="grow">Render Layers</span><svg class="node-flag"><use href="#i-warn"/></svg><svg class="node-flag"><use href="#i-matnode"/></svg></div>
                            <div class="node-row out">Image<i class="sock yellow"></i></div>
                            <div class="node-row out">Alpha<i class="sock grey"></i></div>
                        </div>

                        <div class="node glare">
                            <div class="node-head"><svg class="node-chev"><use href="#i-chevd"/></svg><span class="grow">Glare</span></div>
                            <div class="node-row out">Image<i class="sock yellow"></i></div>
                            <div class="node-fields">
                                <span class="node-drop">Fog Glow<svg class="chev"><use href="#i-chev"/></svg></span>
                                <span class="node-drop">Medium<svg class="chev"><use href="#i-chev"/></svg></span>
                                <span class="node-num"><b>Mix</b>0.000</span>
                                <span class="node-num"><b>Threshold</b>1.000</span>
                                <span class="node-num"><b>Size</b>8</span>
                            </div>
                            <div class="node-row in">Image<i class="sock yellow"></i></div>
                        </div>

                        <div class="node composite">
                            <div class="node-head"><svg class="node-chev"><use href="#i-chevd"/></svg><span class="grow">Composite</span><svg class="node-flag"><use href="#i-matnode"/></svg></div>
                            <label class="node-check"><span class="check small"><svg viewBox="0 0 16 16"><path d="M3.500 8.500l3 3.500 6-8" fill="none" stroke="#fff" stroke-width="2"/></svg></span>Use Alpha</label>
                            <div class="node-row in">Image<i class="sock yellow"></i></div>
                            <div class="node-num light"><i class="sock grey"></i><b>Alpha</b>1.000</div>
                            <div class="node-num light"><i class="sock grey"></i><b>Z</b>1.000</div>
                        </div>

                        <svg class="links" viewBox="0 0 1310 290">
                            <path d="M565 93C636 93 636 241 706 241" class="link-shade"/>
                            <path d="M845 90C902 90 902 127 959 127" class="link-shade"/>
                            <path d="M565 93C636 93 636 241 706 241" class="link"/>
                            <path d="M845 90C902 90 902 127 959 127" class="link"/>
                            <path d="M706 241C776 241 775 90 845 90" class="link-muted"/>
                        </svg>
                        <svg class="pointer" viewBox="0 0 14 20"><path d="M1 1v15l4-3.500 2.500 6 2.500-1-2.500-5.500H13z" fill="#fff" stroke="#222"/></svg>
                        <span class="vbar"></span>
                        <span class="hbar"></span>
                    </div>
                    <aside class="sidebar">
                        <div class="panel tool-panel">
                            <div class="tool-head"><svg class="panel-chev"><use href="#i-chevd"/></svg><span class="grow">Active Tool</span><svg class="grip"><use href="#i-grip"/></svg></div>
                            <div class="tool-name"><svg class="selbox-big"><use href="#i-selbox"/></svg><span>Select Box</span></div>
                            <div class="btn-row tool-modes">
                                <span class="seg blue"><svg class="ic"><use href="#i-modes1"/></svg></span>
                                <span class="seg on"><svg class="ic"><use href="#i-modes2"/></svg></span>
                                <span class="seg on"><svg class="ic"><use href="#i-modes3"/></svg></span>
                            </div>
                        </div>
                    </aside>
                    <div class="vtabs">
                        <span class="vtab">Node</span>
                        <span class="vtab active">Tool</span>
                        <span class="vtab">View</span>
                        <span class="vtab">Options</span>
                        <span class="vtab">Node</span>
                    </div>
                </div>
            </section>
        </div>

        <div class="col-right">
            <section class="area outliner">
                <div class="header out-header">
                    <span class="btn drop"><svg class="ic"><use href="#i-tree"/></svg><svg class="chev"><use href="#i-chev"/></svg></span>
                    <span class="btn drop"><svg class="ic"><use href="#i-layer"/></svg><svg class="chev"><use href="#i-chev"/></svg></span>
                    <span class="btn search out-search"><svg class="ic"><use href="#i-search"/></svg></span>
                    <span class="btn drop out-filter"><svg class="ic"><use href="#i-filter"/></svg><svg class="chev"><use href="#i-chev"/></svg></span>
                    <span class="btn out-clip"></span>
                </div>
                <div class="tree">
                    <div class="row lvl0"><svg class="ic row-ic"><use href="#i-box"/></svg><span>Scene Collection</span></div>
                    <div class="row lvl1 alt">
                        <span class="tri down"></span>
                        <span class="badge"><svg class="ic"><use href="#i-box"/></svg></span>
                        <span class="grow">Collection</span>
                        <svg class="ic row-end vis-check"><use href="#i-check"/></svg>
                        <svg class="ic row-end"><use href="#i-eye"/></svg>
                        <svg class="ic row-end"><use href="#i-cam"/></svg>
                    </div>
                    <div class="row lvl2">
                        <span class="tree-line"></span>
                        <span class="tri right"></span>
                        <span class="badge"><svg class="ic orange"><use href="#i-meshobj"/></svg></span>
                        <span class="cube-name">Cube</span>
                        <svg class="ic teal"><use href="#i-mesh"/></svg>
                        <svg class="ic row-end cube-eye"><use href="#i-eye"/></svg>
                        <svg class="ic row-end"><use href="#i-cam"/></svg>
                    </div>
                </div>
            </section>

            <section class="area props">
                <div class="header prop-header">
                    <span class="btn drop"><svg class="ic"><use href="#i-props"/></svg><svg class="chev"><use href="#i-chev"/></svg></span>
                    <span class="btn search prop-search"><svg class="ic"><use href="#i-search"/></svg></span>
                    <span class="btn prop-menu"><svg class="chev"><use href="#i-chev"/></svg></span>
                </div>
                <div class="prop-body">
                    <div class="prop-tabs">
                        <div class="tab-group first"><span class="ptab"><svg class="pt-ic"><use href="#i-tool"/></svg></span></div>
                        <div class="tab-group">
                            <span class="ptab active"><svg class="pt-ic"><use href="#i-render"/></svg></span>
                            <span class="ptab"><svg class="pt-ic"><use href="#i-output"/></svg></span>
                            <span class="ptab"><svg class="pt-ic"><use href="#i-layer"/></svg></span>
                            <span class="ptab"><svg class="pt-ic"><use href="#i-scene"/></svg></span>
                            <span class="ptab"><svg class="pt-ic"><use href="#i-world"/></svg></span>
                        </div>
                        <div class="tab-group"><span class="ptab"><svg class="pt-ic"><use href="#i-box"/></svg></span></div>
                        <div class="tab-group">
                            <span class="ptab orange"><svg class="pt-ic"><use href="#i-objmode"/></svg></span>
                            <span class="ptab bluei"><svg class="pt-ic"><use href="#i-wrench"/></svg></span>
                            <span class="ptab bluei"><svg class="pt-ic"><use href="#i-particles"/></svg></span>
                            <span class="ptab bluei"><svg class="pt-ic"><use href="#i-physics"/></svg></span>
                            <span class="ptab bluei"><svg class="pt-ic"><use href="#i-constraint"/></svg></span>
                            <span class="ptab teal"><svg class="pt-ic"><use href="#i-mesh"/></svg></span>
                            <span class="ptab rose"><svg class="pt-ic"><use href="#i-material"/></svg></span>
                        </div>
                        <div class="tab-group"><span class="ptab rose"><svg class="pt-ic"><use href="#i-texture"/></svg></span></div>
                    </div>
                    <div class="prop-main">
                        <div class="ctx-row"><svg class="ic"><use href="#i-scene"/></svg><span class="grow">Scene</span><svg class="ic dim"><use href="#i-pin"/></svg></div>
                        <div class="engine-row"><span class="engine-label">Render Engine</span><span class="btn engine-drop"><span class="grow">Eevee</span><svg class="chev"><use href="#i-chev"/></svg></span></div>
                        <div class="panels">
                            <div class="panel sampling">
                                <div class="panel-head"><svg class="panel-chev"><use href="#i-chevd"/></svg><span class="grow">Sampling</span><svg class="grip"><use href="#i-grip"/></svg></div>
                                <div class="field-row"><span class="field-label">Render</span><span class="field top">64</span></div>
                                <div class="field-row"><span class="field-label">Viewport</span><span class="field bottom">16</span></div>
                                <label class="denoise"><span class="check"><svg viewBox="0 0 16 16"><path d="M3.500 8.500l3 3.500 6-8" fill="none" stroke="#fff" stroke-width="2"/></svg></span>Viewport Denois...</label>
                            </div>
                            <div class="panel-head closed"><svg class="panel-chevr"><use href="#i-chevr"/></svg><span class="box"></span><span class="grow">Ambient Occlusion</span><svg class="grip"><use href="#i-grip"/></svg></div>
                            <div class="panel-head closed"><svg class="panel-chevr"><use href="#i-chevr"/></svg><span class="box"></span><span class="grow">Bloom</span><svg class="grip"><use href="#i-grip"/></svg></div>
                            <div class="panel-head closed"><svg class="panel-chevr"><use href="#i-chevr"/></svg><span class="grow">Depth of Field</span><svg class="grip"><use href="#i-grip"/></svg></div>
                            <div class="panel-head closed"><svg class="panel-chevr"><use href="#i-chevr"/></svg><span class="grow">Subsurface Scattering</span><svg class="grip"><use href="#i-grip"/></svg></div>
                            <div class="panel-head closed"><svg class="panel-chevr"><use href="#i-chevr"/></svg><span class="box"></span><span class="grow">Screen Space Reflections</span><svg class="grip"><use href="#i-grip"/></svg></div>
                            <div class="panel-head closed"><svg class="panel-chevr"><use href="#i-chevr"/></svg><span class="box"></span><span class="grow">Motion Blur</span><svg class="grip"><use href="#i-grip"/></svg></div>
                            <div class="panel-head closed"><svg class="panel-chevr"><use href="#i-chevr"/></svg><span class="grow">Volumetrics</span><svg class="grip"><use href="#i-grip"/></svg></div>
                            <div class="panel-head closed"><svg class="panel-chevr"><use href="#i-chevr"/></svg><span class="grow">Performance</span><svg class="grip"><use href="#i-grip"/></svg></div>
                            <div class="panel-head closed"><svg class="panel-chevr"><use href="#i-chevr"/></svg><span class="grow">Curves</span><svg class="grip"><use href="#i-grip"/></svg></div>
                            <div class="panel-head closed"><svg class="panel-chevr"><use href="#i-chevr"/></svg><span class="grow">Shadows</span><svg class="grip"><use href="#i-grip"/></svg></div>
                            <div class="panel-head closed"><svg class="panel-chevr"><use href="#i-chevr"/></svg><span class="grow">Indirect Lighting</span><svg class="grip"><use href="#i-grip"/></svg></div>
                            <div class="panel-head closed"><svg class="panel-chevr"><use href="#i-chevr"/></svg><span class="grow">Film</span><svg class="grip"><use href="#i-grip"/></svg></div>
                        </div>
                        <span class="prop-scroll"></span>
                    </div>
                </div>
            </section>
        </div>
    </div>

    <div class="statusbar">
        <span class="hint"><svg class="hint-ic"><use href="#i-m1"/></svg>Select</span>
        <span class="hint"><svg class="hint-ic"><use href="#i-m2"/></svg>Pan View</span>
        <span class="hint"><svg class="hint-ic"><use href="#i-m3"/></svg>Node Context Menu</span>
        <span class="version">3.6.0</span>
    </div>
</div>
</body>
</html>
```

FILE: styles.css
```css
* {
    box-sizing: border-box;
}

html, body {
    margin: 0;
    height: 100%;
    overflow: hidden;
    background-color: #000;
}

body {
    font-family: "DejaVu Sans", sans-serif;
    font-size: 12.6px;
    color: #dcdcdc;
    white-space: nowrap;
}

.sprite {
    display: none;
}

.grow {
    flex: 1;
    min-width: 0;
}

.ic {
    width: 18px;
    height: 18px;
    flex: none;
    fill: currentColor;
    color: #dcdcdc;
}

.ic.dim {
    color: #8c8c8c;
}

.chev {
    width: 10px;
    height: 10px;
    flex: none;
    color: #dcdcdc;
}

.window {
    width: 1922px;
    height: 1057px;
    display: flex;
    flex-direction: column;
    border-top: 2px solid #34343a;
    border-left: 2px solid #34343a;
}

/* title bar */
.titlebar {
    height: 38px;
    flex: none;
    background-color: #000;
    display: flex;
    align-items: center;
    padding-left: 10px;
    color: #fff;
}

.title-logo {
    width: 19px;
    height: 17px;
    fill: #e87d0d;
    --eye: #3f6ea5;
}

.title-text {
    font-family: "Open Sans", sans-serif;
    font-size: 13.500px;
    margin-left: 6px;
}

.win-btns {
    margin-left: auto;
    width: 154px;
    padding-right: 24px;
    display: flex;
    align-items: center;
    justify-content: space-between;
    color: #fff;
}

.win-min {
    width: 12px;
    height: 1px;
    background-color: #fff;
}

.win-max {
    width: 12px;
    height: 12px;
    border: 1px solid #fff;
}

.win-close {
    width: 14px;
    height: 14px;
    color: #fff;
}

/* top bar */
.topbar {
    height: 34px;
    flex: none;
    background-color: #1d1d1d;
    display: flex;
    align-items: center;
    padding-left: 14px;
    padding-right: 11px;
}

.top-logo {
    width: 19px;
    height: 17px;
    fill: #e6e6e6;
    --eye: #e6e6e6;
    margin-bottom: 2px;
}

.top-menu {
    display: flex;
    margin-left: 3px;
    margin-bottom: 3px;
}

.top-menu span {
    padding: 0 9.500px;
}

.tabs {
    display: flex;
    align-self: flex-end;
    margin-left: 22px;
    font-size: 12.8px;
}

.tab {
    height: 27px;
    padding: 0 11.800px 3px;
    display: flex;
    align-items: center;
    color: #999;
}

.tab:nth-child(n+5) {
    padding: 0 12.400px 3px;
}

.tab:nth-child(5) {
    word-spacing: 4px;
}

.tab:nth-child(10) {
    word-spacing: 2.500px;
}

.tab.active {
    background-color: #303030;
    color: #fff;
    border-radius: 5px 5px 0 0;
    padding: 0 11.500px 3px;
    margin-right: 1px;
}

.tab-add {
    font-size: 19px;
    color: #999;
    align-self: center;
    margin-left: 4px;
    margin-bottom: 4px;
}

.id-group {
    height: 25px;
    display: flex;
    margin-bottom: 3px;
    border: 1px solid #3a3a3a;
    border-radius: 5px;
    overflow: hidden;
    background-color: #282828;
}

.scene-id {
    width: 240px;
    margin-left: auto;
}

.layer-id {
    width: 239px;
    margin-left: 6px;
}

.id-ic {
    width: 38px;
    display: flex;
    align-items: center;
    justify-content: center;
    gap: 1px;
    border-right: 1px solid #3a3a3a;
}

.id-name {
    flex: 1;
    background-color: #1d1d1d;
    display: flex;
    align-items: center;
    justify-content: space-between;
    padding: 0 4px 0 10px;
}

.id-copy {
    width: 25px;
    background-color: #545454;
    display: flex;
    align-items: center;
    justify-content: center;
}

.id-x {
    width: 25px;
    display: flex;
    align-items: center;
    justify-content: center;
}

/* areas */
.main {
    flex: 1;
    min-height: 0;
    display: flex;
    gap: 3px;
    background-color: #0c0c0c;
}

.col-left {
    width: 1584px;
    flex: none;
    display: flex;
    flex-direction: column;
    gap: 3px;
}

.col-right {
    flex: 1;
    min-width: 0;
    display: flex;
    flex-direction: column;
    gap: 3px;
}

.area {
    border-radius: 6px;
    overflow: hidden;
    display: flex;
    flex-direction: column;
}

.viewport {
    height: 632px;
    flex: none;
    background-color: #000;
}

.nodes {
    flex: 1;
    min-height: 0;
}

.outliner {
    height: 306px;
    flex: none;
    background-color: #282828;
}

.props {
    flex: 1;
    min-height: 0;
    background-color: #303030;
}

.header {
    height: 31px;
    flex: none;
    background-color: #303030;
    display: flex;
    align-items: center;
    padding-left: 13px;
}

.btn {
    height: 25px;
    display: inline-flex;
    align-items: center;
    flex: none;
    border: 1px solid #3d3d3d;
    border-radius: 5px;
    background-color: #282828;
}

.drop {
    gap: 1px;
    padding: 0 4px 0 5px;
    background-color: #2b2b2b;
}

.ed-drop {
    width: 39px;
}

.mode-drop {
    width: 136px;
    margin-left: 6px;
    gap: 8px;
    padding: 0 6px 0 6px;
}

.menu {
    display: flex;
    margin-left: 6px;
}

.menu span {
    padding: 0 10px;
}

.orient-drop {
    width: 100px;
    margin-left: 222px;
    gap: 6px;
    padding: 0 6px 0 7px;
}

.pivot-drop {
    width: 40px;
    margin-left: 6px;
}

.btn-row {
    height: 25px;
    display: flex;
    flex: none;
    border: 1px solid #3a3a3a;
    border-radius: 5px;
    overflow: hidden;
    background-color: #2b2b2b;
}

.seg {
    width: 24px;
    display: flex;
    align-items: center;
    justify-content: center;
    flex: none;
    border-right: 1px solid #3a3a3a;
}

.seg:last-child {
    border-right: 0;
}

.seg.on {
    background-color: #545454;
    border-right-color: #3f3f3f;
}

.seg.blue {
    background-color: #4772b3;
}

.seg.navy {
    background-color: #3f5f92;
}

.seg .ic {
    color: #e6e6e6;
}

.seg.blue .ic {
    color: #fff;
}

.seg.faded .ic,
.seg.faded .chev {
    color: #6e6e6e;
}

.seg-wide {
    width: 38px;
    gap: 1px;
}

.seg-chev {
    width: 24px;
}

.seg-chevw {
    width: 38px;
    gap: 1px;
}

.snap-row {
    margin-left: 6px;
}

.prop-row {
    margin-left: 7px;
}

.vis-drop {
    width: 39px;
    margin-left: 340px;
}

.gizmo-row {
    margin-left: 8px;
}

.gizmo-row .seg-chev {
    width: 20px;
}

.overlay-row {
    margin-left: 9px;
}

.overlay-row .seg-chev {
    width: 22px;
}

.xray-row {
    margin-left: 8px;
}

.xray-row .seg {
    width: 21px;
}

.shade-row {
    margin-left: 7px;
}

.shade-row .seg.on .ic,
.modes .seg.on .ic,
.tool-modes .seg.on .ic {
    color: #c4c4c4;
}

/* tool settings row */
.toolset {
    height: 32px;
    flex: none;
    background-color: #232323;
    display: flex;
    align-items: center;
    padding-left: 56px;
    padding-right: 9px;
}

.modes {
    background-color: #545454;
}

.modes .ic,
.tool-modes .ic {
    width: 16px;
    height: 16px;
}

.options {
    margin-left: auto;
    width: 81px;
    gap: 6px;
    padding-left: 9px;
}

.scene-view {
    flex: 1;
    position: relative;
    overflow: hidden;
    background-color: #000;
}

.cube {
    position: absolute;
    left: 722px;
    top: 206px;
    width: 140px;
    height: 135px;
}

.toolbar {
    position: absolute;
    left: 11px;
    top: 10px;
    display: flex;
    flex-direction: column;
    gap: 6px;
}

.tool-group {
    width: 50px;
    background-color: #282828;
    border-radius: 5px;
    overflow: hidden;
    display: flex;
    flex-direction: column;
}

.tool {
    height: 43px;
    position: relative;
    display: flex;
    align-items: center;
    justify-content: center;
    padding-bottom: 2px;
    border-top: 1px solid #3a3a3a;
}

.tool:first-child {
    border-top: 0;
}

.tool.active {
    background-color: #4772b3;
}

.tool.corner::after {
    content: "";
    position: absolute;
    right: 3px;
    bottom: 3px;
    border-left: 6px solid transparent;
    border-bottom: 6px solid #8a8a8a;
}

.tool-ic {
    width: 30px;
    height: 30px;
}

.selbox-ic {
    width: 28px;
    height: 28px;
}

.scale-ic {
    width: 22px;
    height: 22px;
}

.mouse-hint {
    position: absolute;
    left: 105px;
    top: 431px;
    width: 36px;
    height: 46px;
}

.gizmo {
    position: absolute;
    left: 1473px;
    top: 11px;
    width: 100px;
    height: 100px;
}

.gz-label {
    font-size: 12px;
    font-weight: 700;
    text-anchor: middle;
    fill: #1d2a33;
}

.nav-btns {
    position: absolute;
    left: 1539px;
    top: 114px;
    display: flex;
    flex-direction: column;
    gap: 3.500px;
}

.nav-btn {
    width: 34px;
    height: 34px;
    border-radius: 50%;
    background-color: #141414;
    display: flex;
    align-items: center;
    justify-content: center;
}

.nav-ic {
    width: 22px;
    height: 22px;
    fill: #e6e6e6;
    color: #e6e6e6;
}

.side-toggle {
    position: absolute;
    right: 0;
    top: 19px;
    width: 10px;
    height: 16px;
    background-color: #1a1a1a;
    border-radius: 4px 0 0 4px;
    display: flex;
    align-items: center;
    justify-content: center;
}

.tog-ic {
    width: 8px;
    height: 12px;
    color: #bbb;
    transform: scaleX(-1);
}

/* node editor */
.node-header {
    background-color: #252525;
}

.node-menu {
    margin-left: 5px;
}

.use-nodes {
    display: flex;
    align-items: center;
    gap: 5px;
    margin-left: 6px;
}

.check {
    width: 17px;
    height: 17px;
    flex: none;
    border-radius: 4px;
    background-color: #4772b3;
    display: inline-flex;
}

.check.small {
    width: 12px;
    height: 12px;
    border-radius: 3px;
}

.node-pin {
    margin-left: 783px;
}

.up-btn {
    height: 24px;
    margin-left: 11px;
    border: 0;
    border-radius: 5px;
    background-color: #2e2e2e;
}

.backdrop-row {
    margin-left: 6px;
}

.backdrop-btn {
    width: 103px;
    text-shadow: 0 1px 1px #222;
}

.letter {
    font-size: 18px;
    color: #c8c8c8;
}

.node-snap {
    margin-left: 5px;
}

.node-overlay {
    margin-left: 7px;
}

.node-body {
    flex: 1;
    min-height: 0;
    display: flex;
    background-color: #1d1d1d;
}

.canvas {
    width: 1310px;
    flex: none;
    position: relative;
    overflow: hidden;
    background-color: #1d1d1d;
    background-image:
        radial-gradient(circle, #2c2c2c 1.600px, transparent 2px),
        radial-gradient(circle, #262626 1px, transparent 1.400px);
    background-size: 99px 99px, 19.800px 19.800px;
    background-position: 29.500px -37.500px, 9.100px 2.100px;
}

.crumbs {
    position: absolute;
    left: 0;
    top: 18px;
    display: flex;
    align-items: center;
    color: #dcdcdc;
}

.crumb-toggle {
    width: 8px;
    height: 12px;
    color: #aaa;
}

.crumb-ic {
    margin-left: 17px;
    margin-right: 12px;
}

.crumb-sep {
    width: 10px;
    height: 14px;
    margin-left: 20px;
    color: #ccc;
}

.crumb-sep + .crumb-ic {
    margin-left: 9px;
    margin-right: 12px;
}

.node {
    position: absolute;
    background-color: #303030;
    font-size: 10px;
    border-radius: 4px;
    box-shadow: 0 3px 8px rgba(0, 0, 0, .45);
    color: #dcdcdc;
}

.node-head {
    display: flex;
    align-items: center;
    border-radius: 4px 4px 0 0;
    padding: 0 8px 0 11px;
    gap: 5px;
}

.node-chev {
    width: 9px;
    height: 7px;
    flex: none;
}

.node-flag {
    width: 14px;
    height: 14px;
    flex: none;
    fill: #e6e6e6;
    margin-left: -3px;
}

.node-row {
    position: relative;
    height: 16px;
    display: flex;
    align-items: center;
}

.node-row.out {
    justify-content: flex-end;
}

.sock {
    position: absolute;
    width: 9px;
    height: 9px;
    border-radius: 50%;
    z-index: 3;
}

.node-row.out .sock {
    right: -4.500px;
}

.node-row.in .sock {
    left: -4.500px;
}

.sock.yellow {
    background-color: #c7a03a;
}

.sock.grey {
    background-color: #a1a1a1;
}

.render-layers {
    left: 328px;
    top: 59px;
    width: 237px;
    height: 240px;
    border-radius: 4px 4px 0 0;
}

.render-layers .node-head {
    height: 19px;
    background-color: #83304a;
}

.render-layers .node-row {
    padding-right: 11px;
    height: 22px;
}

.render-layers .node-row:nth-child(2) {
    margin-top: 4px;
}

.glare {
    left: 706px;
    top: 55px;
    width: 139px;
    height: 202px;
    outline: 1.500px solid #e8e8e8;
    background-color: #232323;
    color: #8a8a8a;
}

.glare .node-head {
    height: 20px;
    background-color: #2b1f2d;
}

.glare .node-row.out {
    padding-right: 11px;
    margin-top: 7px;
}

.glare .node-row.in {
    padding-left: 11px;
    margin-top: 6px;
}

.node-fields {
    display: flex;
    flex-direction: column;
    gap: 5px;
    padding: 11px 10px 0;
}

.node-drop {
    height: 20px;
    display: flex;
    align-items: center;
    justify-content: space-between;
    padding: 0 3px 0 8px;
    border: 1px solid #333;
    border-radius: 4px;
    background-color: #272727;
}

.node-drop .chev {
    color: #666;
}

.node-drop + .node-num {
    margin-top: -1px;
}

.node-num {
    height: 20px;
    display: flex;
    align-items: center;
    justify-content: space-between;
    padding: 0 13px 0 16px;
    border-radius: 4px;
    background-color: #333;
}

.node-num b {
    font-weight: 400;
}

.composite {
    left: 959px;
    top: 68px;
    width: 138px;
    height: 118px;
}

.composite .node-head {
    height: 20px;
    background-color: #401c28;
}

.node-check {
    display: flex;
    align-items: center;
    gap: 4px;
    height: 18px;
    padding-left: 10px;
    margin-top: 6px;
}

.composite .node-row {
    height: 18px;
    padding-left: 10px;
    margin-top: 6px;
}

.composite .node-num {
    position: relative;
    height: 18px;
    margin: 4px 9px 0 10px;
    padding-left: 15px;
    background-color: #545454;
    text-shadow: 0 1px 1px #222;
}

.composite .node-num .sock {
    left: -15.500px;
}

.links {
    position: absolute;
    left: 0;
    top: 0;
    width: 1310px;
    height: 290px;
    z-index: 2;
    pointer-events: none;
}

.link {
    fill: none;
    stroke: #e9e6cf;
    stroke-width: 2;
}

.link-shade {
    fill: none;
    stroke: #111;
    stroke-width: 3.500;
    opacity: .6;
}

.link-muted {
    fill: none;
    stroke: #4d4d44;
    stroke-width: 2;
}

.pointer {
    position: absolute;
    left: 817px;
    top: 75px;
    width: 14px;
    height: 20px;
    z-index: 4;
}

.vbar {
    position: absolute;
    left: 1302px;
    top: 12px;
    width: 5px;
    height: 171px;
    border-radius: 3px;
    background-color: #333;
}

.hbar {
    position: absolute;
    left: 12px;
    top: 284px;
    width: 1286px;
    height: 4px;
    border-radius: 2px;
    background-color: #333;
    z-index: 1;
}

.sidebar {
    width: 249px;
    flex: none;
    background-color: #303030;
    padding: 2px 9px 0 10px;
}

.panel {
    background-color: #3d3d3d;
    border-radius: 5px;
}

.tool-panel {
    height: 112px;
    padding: 0 9px 0 11px;
    color: #eee;
}

.tool-head {
    height: 32px;
    display: flex;
    align-items: center;
    gap: 5px;
    padding-right: 0;
}

.panel-chev {
    width: 11px;
    height: 8px;
    flex: none;
    color: #ccc;
}

.grip {
    width: 15px;
    height: 7px;
    flex: none;
    fill: #c4c4c4;
}

.tool-name {
    display: flex;
    align-items: center;
    gap: 14px;
    height: 28px;
    margin-top: 7px;
    padding-left: 7px;
    color: #c8c8c8;
}

.selbox-big {
    width: 28px;
    height: 28px;
}

.tool-modes {
    width: 72px;
    height: 24px;
    margin-top: 10px;
    background-color: #545454;
}

.vtabs {
    flex: 1;
    display: flex;
    flex-direction: column;
    gap: 5px;
    padding: 6px 3px 0 0;
    overflow: hidden;
    background-color: #1d1d1d;
}

.vtab {
    writing-mode: vertical-rl;
    padding: 10px 0;
    width: 22px;
    flex: none;
    display: flex;
    align-items: center;
    color: #c4c4c4;
    background-color: #232323;
    border: 1px solid #3a3a3a;
    border-left: 0;
    border-radius: 0 5px 5px 0;
}

.vtab.active {
    background-color: #303030;
    color: #fff;
}

/* outliner */
.out-header {
    padding-left: 10px;
    gap: 6px;
}

.out-header .drop {
    width: 40px;
}

.search {
    padding-left: 4px;
    background-color: #1d1d1d;
}

.out-search {
    width: 143px;
    margin-left: 14px;
}

.out-filter {
    margin-left: 14px;
}

.out-clip {
    width: 12px;
    background-color: #545454;
}

.tree {
    padding-top: 2px;
    color: #c8c8c8;
}

.row {
    height: 25px;
    display: flex;
    align-items: center;
    position: relative;
    padding-right: 17px;
}

.row.alt {
    background-color: #2c2c2c;
}

.row-ic {
    margin-right: 9px;
}

.lvl0 {
    padding-left: 28px;
}

.lvl1 {
    padding-left: 33px;
}

.lvl2 {
    padding-left: 58px;
}

.badge {
    width: 24px;
    height: 24px;
    flex: none;
    margin-left: 8px;
    margin-right: 7px;
    border-radius: 6px;
    background-color: #454545;
    display: flex;
    align-items: center;
    justify-content: center;
}

.tri {
    width: 0;
    height: 0;
    flex: none;
}

.tri.down {
    border-left: 4px solid transparent;
    border-right: 4px solid transparent;
    border-top: 7px solid #c8c8c8;
}

.tri.right {
    border-top: 4px solid transparent;
    border-bottom: 4px solid transparent;
    border-left: 7px solid #c8c8c8;
    margin-right: 1px;
}

.tree-line {
    position: absolute;
    left: 37px;
    top: 6px;
    width: 1px;
    height: 13px;
    background-color: #555;
}

.ic.orange {
    color: #cc8a3d;
}

.ic.teal {
    color: #1f9a90;
}

.cube-name {
    width: 62px;
}

.row-end {
    width: 16px;
    height: 16px;
    margin-left: 9px;
}

.vis-check {
    width: 14px;
    height: 14px;
}

.cube-eye {
    margin-left: auto;
}

/* properties */
.prop-header {
    padding-left: 9px;
}

.prop-header .drop {
    width: 40px;
}

.prop-search {
    width: 144px;
    margin-left: 38px;
}

.prop-menu {
    width: 25px;
    margin-left: auto;
    margin-right: 12px;
    justify-content: center;
}

.prop-body {
    flex: 1;
    min-height: 0;
    display: flex;
}

.prop-tabs {
    width: 35px;
    flex: none;
    padding-top: 1px;
    background-color: #1d1d1d;
    display: flex;
    flex-direction: column;
}

.tab-group {
    padding-top: 8px;
    border-bottom: 1px solid #2a2a2a;
}

.tab-group.first {
    padding-bottom: 1px;
}

.ptab {
    height: 35px;
    display: flex;
    align-items: center;
    justify-content: center;
    margin-left: 3px;
    padding-right: 3px;
    color: #d4d4d4;
}

.ptab.active {
    background-color: #303030;
    border-radius: 6px 0 0 6px;
}

.ptab.orange {
    color: #c9965a;
}

.ptab.bluei {
    color: #5a8fd6;
}

.ptab.teal {
    color: #1f9a90;
}

.ptab.rose {
    color: #a84f5e;
}

.pt-ic {
    width: 18px;
    height: 18px;
    fill: currentColor;
}

.prop-main {
    flex: 1;
    min-width: 0;
    position: relative;
    overflow: hidden;
    padding: 0 11px 0 10px;
    text-shadow: 0 1px 1px #1c1c1c;
}

.ctx-row {
    height: 44px;
    display: flex;
    align-items: center;
    gap: 11px;
    padding: 0 3px 0 3px;
}

.engine-row {
    height: 24px;
    margin-top: 11px;
    display: flex;
    align-items: center;
    gap: 12px;
    padding-left: 12px;
}

.engine-label {
    width: 94px;
    flex: none;
    color: #d8d8d8;
}

.engine-drop {
    flex: 1;
    height: 24px;
    padding: 0 5px 0 8px;
    background-color: #282828;
}

.panels {
    margin-top: 13px;
    display: flex;
    flex-direction: column;
    gap: 2px;
}

.sampling {
    height: 132px;
    flex: none;
    margin-bottom: 1px;
}

.panel-head {
    height: 31px;
    flex: none;
    display: flex;
    align-items: center;
    padding: 0 10px 0 12px;
    gap: 7px;
}

.panel-head.closed {
    background-color: #3d3d3d;
    border-radius: 5px;
}

.sampling .panel-head {
    height: 32px;
    padding-left: 11px;
    gap: 5px;
}

.panel-chevr {
    width: 8px;
    height: 12px;
    flex: none;
    color: #ccc;
}

.box {
    width: 17px;
    height: 17px;
    flex: none;
    margin-left: -1px;
    margin-right: -3.300px;
    border-radius: 4px;
    background-color: #545454;
}

.field-row {
    display: flex;
    align-items: center;
    height: 24px;
}

.field-row:nth-child(2) {
    margin-top: 9.500px;
}

.field-label {
    width: 108px;
    flex: none;
    text-align: right;
    color: #d2d2d2;
}

.field {
    width: 147px;
    height: 23px;
    margin-left: 11px;
    background-color: #545454;
    display: flex;
    align-items: center;
    justify-content: center;
}

.field.top {
    border-radius: 4px 4px 0 0;
}

.field.bottom {
    border-radius: 0 0 4px 4px;
}

.denoise {
    display: flex;
    align-items: center;
    gap: 4px;
    margin-top: 11px;
    margin-left: 119px;
}

.prop-scroll {
    position: absolute;
    right: 3px;
    top: 42px;
    width: 4px;
    height: 456px;
    border-radius: 2px;
    background-color: #454545;
}

/* status bar */
.statusbar {
    height: 27px;
    flex: none;
    display: flex;
    align-items: center;
    padding-left: 16px;
    padding-right: 12px;
    background-color: #1d1d1d;
    color: #9a9a9a;
}

.hint {
    width: 281px;
    flex: none;
    display: flex;
    align-items: center;
    gap: 15px;
}

.hint-ic {
    width: 13px;
    height: 19px;
    flex: none;
    color: #a8a8a8;
}

.version {
    margin-left: auto;
}
```
